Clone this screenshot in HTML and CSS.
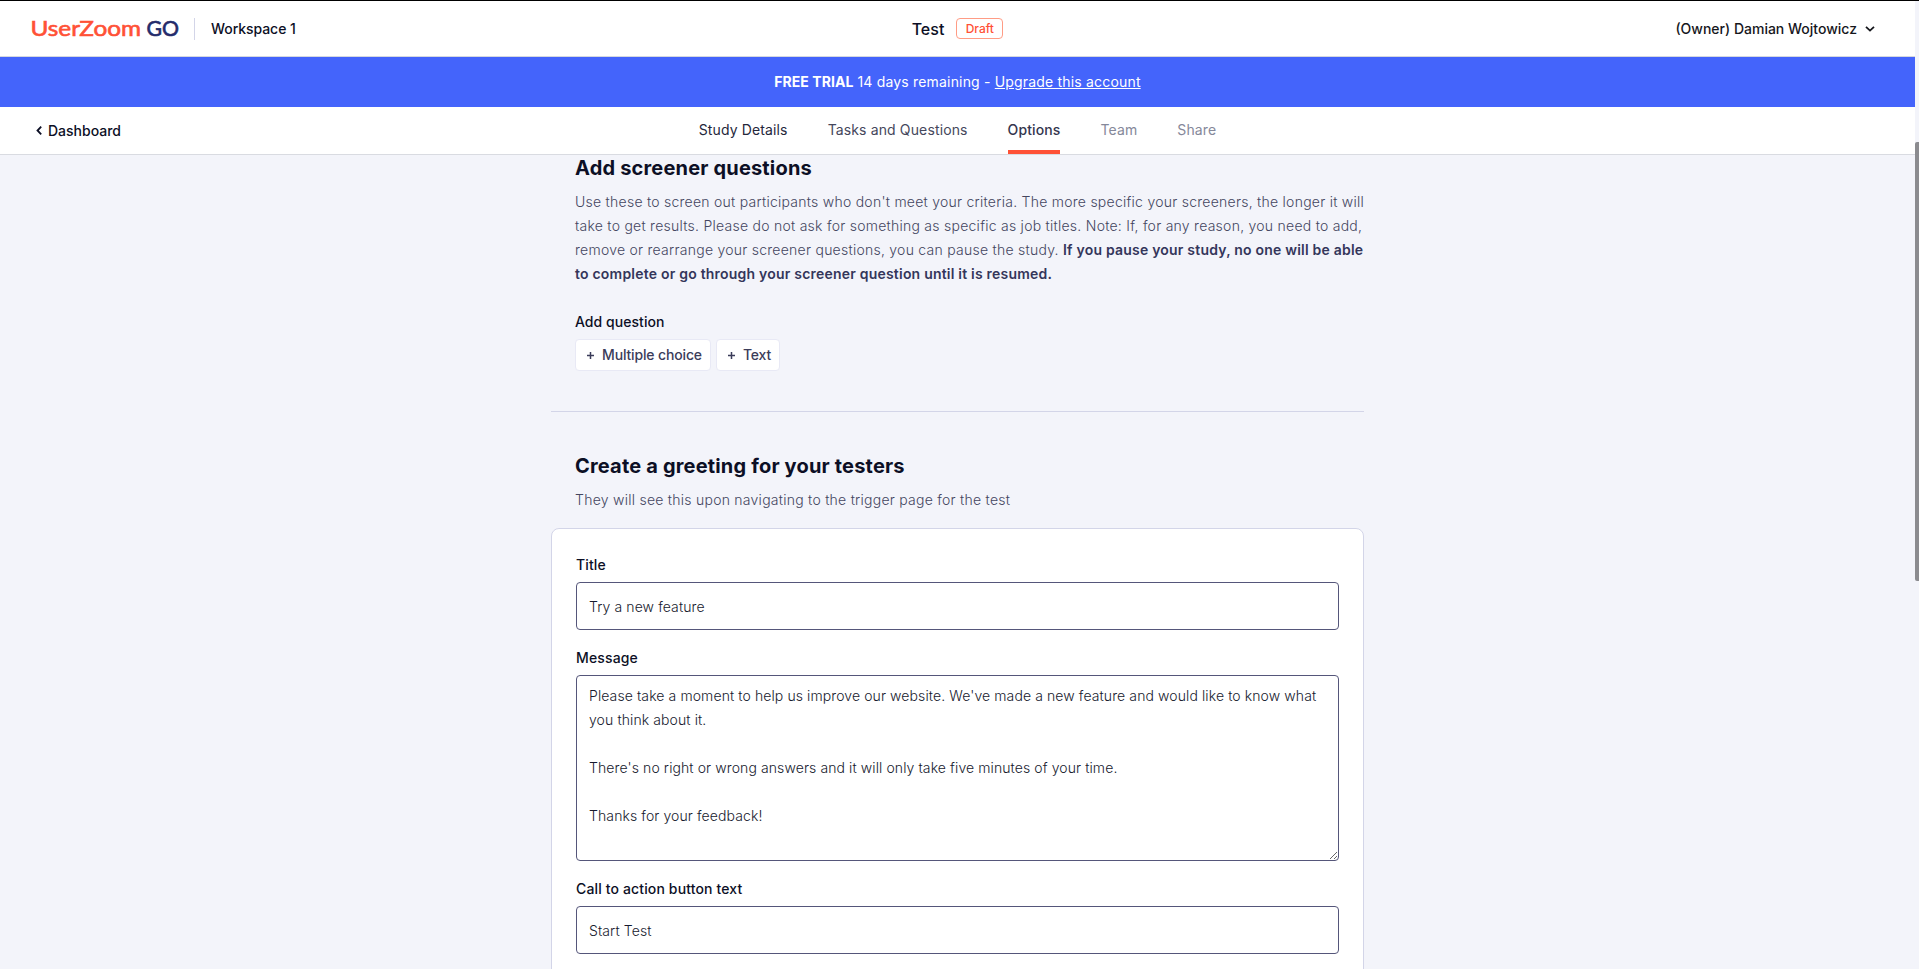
FILE: index.html
```html
<!DOCTYPE html>
<html lang="en">
<head>
<meta charset="utf-8">
<title>Test - UserZoom GO</title>
<link rel="stylesheet" href="styles.css">
</head>
<body>
<div class="page">
  <header class="topbar">
    <div class="brand">
      <svg class="logo" width="148" height="24" viewBox="0 0 148 24" role="img" aria-label="UserZoom GO">
        <text class="logo-user" x="-.5" y="19" textLength="110.5" lengthAdjust="spacingAndGlyphs">UserZoom</text>
        <text class="logo-go" x="115.5" y="19" textLength="32.5" lengthAdjust="spacingAndGlyphs">GO</text>
      </svg>
      <span class="workspace">Workspace 1</span>
    </div>
    <div class="study"><span class="study-name">Test</span><span class="badge">Draft</span></div>
    <div class="account"><span>(Owner) Damian Wojtowicz</span>
      <svg width="10" height="6" viewBox="0 0 10 6"><path d="M1 .8 5 4.6 9 .8" fill="none" stroke="#16171c" stroke-width="1.8"/></svg>
    </div>
  </header>
  <div class="trial"><p><b>FREE TRIAL</b> 14 days remaining - <a href="#">Upgrade this account</a></p></div>
  <nav class="nav">
    <a class="back" href="#"><svg width="6" height="9" viewBox="0 0 6 9"><path d="M5.2 .7 1.5 4.5 5.2 8.3" fill="none" stroke="#0c0f25" stroke-width="1.8"/></svg><span>Dashboard</span></a>
    <div class="tabs">
      <a class="tab tab-first" href="#">Study Details</a>
      <a class="tab" href="#">Tasks and Questions</a>
      <a class="tab active" href="#">Options</a>
      <a class="tab muted" href="#">Team</a>
      <a class="tab muted" href="#">Share</a>
    </div>
  </nav>
  <main class="content">
    <section class="screener">
      <h2>Add screener questions</h2>
      <p class="desc">Use these to screen out participants who don't meet your criteria. The more specific your screeners, the longer it will<br>take to get results. Please do not ask for something as specific as job titles. Note: If, for any reason, you need to add,<br>remove or rearrange your screener questions, you can pause the study. <b>If you pause your study, no one will be able<br>to complete or go through your screener question until it is resumed.</b></p>
      <h3>Add question</h3>
      <div class="buttons">
        <button class="btn btn-choice"><svg width="7" height="7" viewBox="0 0 7 7"><path d="M3.5 0v7M0 3.5h7" stroke="#3b3c5a" stroke-width="1.5"/></svg><span>Multiple choice</span></button>
        <button class="btn btn-text"><svg width="7" height="7" viewBox="0 0 7 7"><path d="M3.5 0v7M0 3.5h7" stroke="#3b3c5a" stroke-width="1.5"/></svg><span>Text</span></button>
      </div>
    </section>
    <section class="greeting">
      <h2>Create a greeting for your testers</h2>
      <p class="desc">They will see this upon navigating to the trigger page for the test</p>
    </section>
    <form class="card">
      <label for="title">Title</label>
      <input id="title" type="text" value="Try a new feature">
      <label for="message">Message</label>
      <textarea id="message">Please take a moment to help us improve our website. We've made a new feature and would like to know what you think about it.

There's no right or wrong answers and it will only take five minutes of your time.

Thanks for your feedback!</textarea>
      <label for="cta">Call to action button text</label>
      <input id="cta" type="text" value="Start Test">
    </form>
  </main>
</div>
<div class="scrollbar"><div class="thumb"></div></div>
</body>
</html>
```

FILE: styles.css
```css
* { box-sizing: border-box; }
body {
  margin: 0;
  height: 969px;
  overflow: hidden;
  display: flex;
  background: #f3f4fa;
  border-top: 1px solid #000;
  font: 14px/24px Inter, sans-serif;
  color: #0c0f25;
}
a { color: inherit; text-decoration: none; }
h2, h3, p { margin: 0; }
.page { width: 1915px; height: 968px; overflow: hidden; }

.topbar {
  height: 56px;
  padding: 0 40px 0 31px;
  display: grid;
  grid-template-columns: 1fr auto 1fr;
  align-items: center;
  background: #fff;
  border-bottom: 1px solid #d5d8df;
  font-weight: 500;
}
.brand { display: flex; align-items: center; }
.logo { display: block; overflow: visible; }
.logo text { font: 400 20.4px Lato, sans-serif; stroke-width: .6px; }
.logo-user { fill: #ff5136; stroke: #ff5136; }
.logo-go { fill: #242b6b; stroke: #242b6b; }
.workspace {
  height: 22px;
  margin-left: 15px;
  padding-left: 16px;
  border-left: 1px solid #d3d5e8;
  line-height: 22px;
  letter-spacing: -.06px;
}
.study { display: flex; align-items: center; gap: 12px; padding-left: 9px; }
.study-name { font-size: 16px; }
.badge {
  height: 21px;
  width: 47px;
  text-align: center;
  border: 1px solid #ff9c85;
  border-radius: 4px;
  font-size: 12px;
  line-height: 19px;
  color: #ff5136;
}
.account { display: flex; align-items: center; justify-content: flex-end; gap: 8px; color: #16171c; }

.trial { height: 50px; background: #4464fb; color: #fff; text-align: center; line-height: 50px; letter-spacing: .18px; }
.trial b { font-weight: 700; letter-spacing: .05px; }
.trial a { text-decoration: underline; }

.nav {
  height: 48px;
  padding: 0 36px;
  display: grid;
  grid-template-columns: 1fr auto 1fr;
  background: #fff;
  border-bottom: 1px solid #d9dbe1;
}
.back { display: flex; align-items: center; gap: 6px; font-weight: 500; }
.tabs { display: flex; gap: 40px; }
.tab {
  height: 47px;
  line-height: 46px;
  letter-spacing: .13px;
  border-bottom: 4px solid transparent;
  color: #45475c;
}
.tab-first { color: #25273b; }
.active { font-weight: 500; border-color: #ff5136; letter-spacing: .1px; color: #34364e; }
.muted { color: #85889a; }

.content { width: 813px; margin: 0 auto; }
.screener { height: 257px; padding: 0 0 0 24px; border-bottom: 1px solid #d3d5e8; }
h2 { margin-bottom: 9px; font-size: 20px; line-height: 26px; font-weight: 650; letter-spacing: .18px; }
.desc { white-space: nowrap; font-weight: 350; letter-spacing: .255px; color: #44465f; }
.desc b { font-weight: 600; letter-spacing: .21px; color: #34365a; }
h3 { margin: 24px 0 5px; font-size: 14px; line-height: 24px; font-weight: 500; letter-spacing: .05px; }
.buttons { display: flex; gap: 5px; }
.btn {
  height: 32px;
  padding: 0 8px 0 11px;
  display: flex;
  align-items: center;
  gap: 8px;
  background: #fff;
  border: 1px solid #e8e9f5;
  border-radius: 4px;
  font: 500 14px/24px Inter, sans-serif;
  letter-spacing: -.15px;
  color: #3b3c5a;
}
.greeting { padding: 41px 0 16px 24px; }
.card {
  height: 600px;
  padding: 24px;
  background: #fff;
  border: 1px solid #d3d5e8;
  border-radius: 8px;
}
label { display: block; margin-bottom: 5px; font-weight: 500; line-height: 24px; letter-spacing: .14px; }
input, textarea {
  display: block;
  width: 763px;
  margin: 0 0 16px;
  padding: 0 12px;
  border: 1px solid #55567a;
  border-radius: 4px;
  background: #fff;
  font: 350 14px/24px Inter, sans-serif;
  letter-spacing: .1px;
  color: #171a2e;
}
input { height: 48px; }
textarea { height: 186px; padding-top: 8px; overflow: hidden; resize: vertical; }

.scrollbar { width: 4px; height: 968px; padding-top: 141px; background: #f3f4fa; }
.thumb { height: 439px; background: #8b8b8f; border-radius: 2px 0 0 2px; }
```
